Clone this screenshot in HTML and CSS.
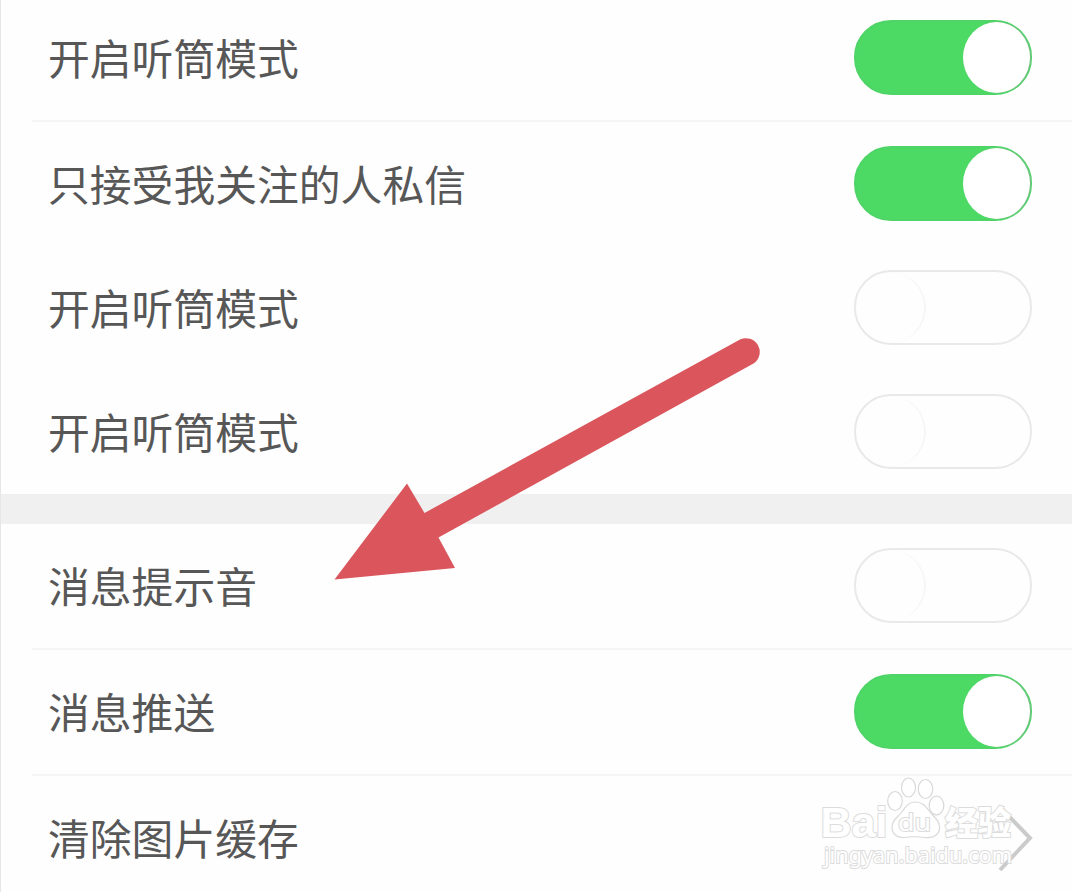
FILE: index.html
```html
<!DOCTYPE html>
<html lang="zh-CN">
<head>
    <meta charset="UTF-8">
    <title>设置</title>
    <link rel="stylesheet" href="styles.css">
</head>
<body>
<div class="page">
    <ul class="list first">
        <li class="row line"><span class="label">开启听筒模式</span><i class="switch on"></i></li>
        <li class="row"><span class="label">只接受我关注的人私信</span><i class="switch on"></i></li>
        <li class="row"><span class="label">开启听筒模式</span><i class="switch"></i></li>
        <li class="row"><span class="label">开启听筒模式</span><i class="switch"></i></li>
    </ul>
    <ul class="list">
        <li class="row line"><span class="label">消息提示音</span><i class="switch"></i></li>
        <li class="row line"><span class="label">消息推送</span><i class="switch on"></i></li>
        <li class="row">
            <span class="label">清除图片缓存</span>
            <svg class="more" width="36" height="68" viewBox="0 0 36 68">
                <path d="M2 3L32 34L2 66"/>
            </svg>
        </li>
    </ul>
    <svg class="arrow" width="430" height="246" viewBox="334 336 430 246">
        <path d="M334.5 579.5L407 483.5L424.5 513L740 339.5A13.8 13.8 0 0 1 753.5 363.5L438.5 537.5L455 568Z"/>
    </svg>
    <svg class="mark" width="200" height="100" viewBox="818 774 200 100">
        <text class="logo" x="820.5" y="836.5" textLength="67" lengthAdjust="spacingAndGlyphs">Bai</text>
        <ellipse cx="895" cy="801" rx="7.3" ry="9.5"/>
        <ellipse cx="908.5" cy="787.5" rx="7" ry="9.5"/>
        <ellipse cx="925.5" cy="789" rx="7.3" ry="9.5"/>
        <ellipse cx="936.5" cy="805.5" rx="7.3" ry="9.3"/>
        <path d="M915 802C908 802 905 808 901 813C897 818 892 820 892 827C892 834 897 838 904 837.5C911 836.5 918 836.5 925 837.5C934 838.5 940 834 939.5 827C939.5 820 934 817 930 812C926 807 923 802 915 802Z"/>
        <text class="du" x="898" y="831" textLength="33" lengthAdjust="spacingAndGlyphs">du</text>
        <text class="cn" x="945" y="835" textLength="66">经验</text>
        <text class="site" x="824" y="862.5" textLength="188" lengthAdjust="spacingAndGlyphs">jingyan.baidu.com</text>
    </svg>
</div>
</body>
</html>
```

FILE: styles.css
```css
body{
    margin: 0;
    overflow: hidden;
    background-color: #fefefe;
    font-family: "Noto Sans CJK SC", sans-serif;
}
ul{
    list-style: none;
    margin: 0;
    padding: 0;
}
.page{
    position: relative;
    box-sizing: border-box;
    height: 892px;
    overflow: hidden;
    border-left: 1px solid #e6e6e6;
}
.first{
    margin-top: -4px;
    border-bottom: 30px solid #f0f0f0;
}
.row{
    display: flex;
    align-items: center;
    justify-content: space-between;
    height: 124px;
    margin-left: 31px;
    padding: 0 40px 0 16px;
}
.line{
    border-bottom: 2px solid #f5f5f5;
}
.label{
    padding-bottom: 2px;
    font-size: 41.8px;
    line-height: 60px;
    color: #575757;
}
.switch{
    display: flex;
    align-items: center;
    box-sizing: border-box;
    width: 178px;
    height: 75px;
    margin-bottom: 1px;
    border: 2px solid #e9e9e9;
    border-radius: 37px;
}
.switch::before{
    content: "";
    box-sizing: border-box;
    width: 70px;
    height: 71px;
    border-right: 2px solid #f6f6f6;
    border-radius: 50%;
}
.on{
    justify-content: flex-end;
    border-color: #4fd468;
    background-color: #4cd964;
}
.on::before{
    width: 67px;
    height: 71px;
    border: 0;
    background-color: #fff;
    box-shadow: 1px 0 1px #7cbd88;
}
.more{
    margin-right: -2px;
    fill: none;
    stroke: #cbcbcb;
    stroke-width: 4;
}
.arrow{
    position: absolute;
    left: 333px;
    top: 336px;
    fill: #da565c;
}
/* 水印 */
.mark{
    position: absolute;
    left: 817px;
    top: 774px;
    fill: #fff;
    stroke: #d9d9d9;
    stroke-width: 1.2;
}
.mark text{
    paint-order: stroke;
    stroke: #dcdcdc;
    stroke-width: 2;
}
.logo{
    font: bold 43px "Liberation Sans", sans-serif;
}
.mark .du{
    font: 24px "Noto Sans", sans-serif;
}
.cn{
    font: 900 33px "Noto Sans CJK SC", sans-serif;
}
.site{
    font: 22px "Noto Sans", sans-serif;
}
```
